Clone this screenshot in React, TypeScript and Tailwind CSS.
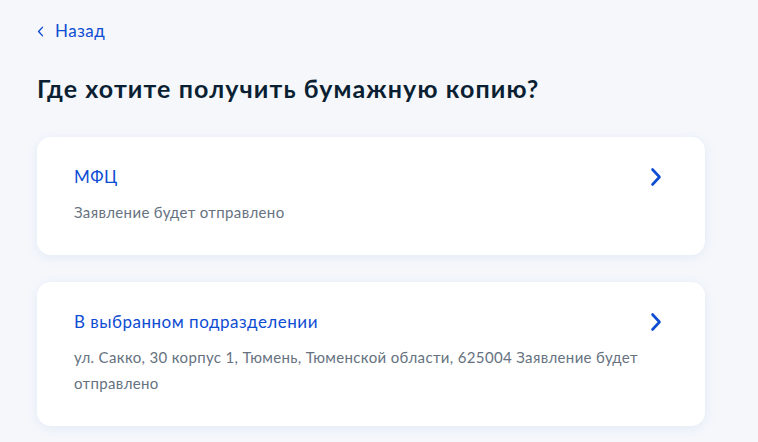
const OPTIONS = [
  { title: 'МФЦ', text: 'Заявление будет отправлено' },
  {
    title: 'В выбранном подразделении',
    text: 'ул. Сакко, 30 корпус 1, Тюмень, Тюменской области, 625004 Заявление будет отправлено',
  },
];

function Chevron({ dir = 'right', className = '' }: { dir?: 'left' | 'right'; className?: string }) {
  return (
    <svg viewBox="0 0 12 20" className={className} fill="none">
      <path
        d={dir === 'right' ? 'M2.5 2.5 L9.5 10 L2.5 17.5' : 'M9.5 2.5 L2.5 10 L9.5 17.5'}
        stroke="currentColor"
        strokeWidth={2.6}
        strokeLinecap="round"
        strokeLinejoin="round"
      />
    </svg>
  );
}

export default function App() {
  return (
    <div className="min-h-[442px] w-full bg-[#f5f7fb] pl-[37px] pt-[20px] font-['Lato','Noto_Sans',sans-serif]">
      {/* Back link */}
      <div className="flex items-center gap-[11px] text-[#0d4cd3] h-[22px]">
        <Chevron dir="left" className="w-[7px] h-[11px]" />
        <span className="text-[17px] leading-[22px] tracking-[0.5px]">Назад</span>
      </div>

      <h1 className="mt-[30px] text-[25px] leading-[32px] font-bold tracking-[1.1px] text-[#0b1f33]">
        Где хотите получить бумажную копию?
      </h1>

      <div className="mt-[33px] w-[668px] flex flex-col gap-[27px]">
        {OPTIONS.map((o) => (
          <div
            key={o.title}
            className="rounded-[14px] bg-white pl-[37px] pr-[43px] pt-[28px] pb-[30px] shadow-[0_2px_12px_rgba(102,150,210,0.12)] flex items-start"
          >
            <div className="flex-1">
              <p className="text-[17px] leading-[24px] tracking-[0.5px] text-[#0d4cd3]">{o.title}</p>
              <p className="mt-[10px] text-[15px] leading-[26px] tracking-[0.35px] text-[#66727f]">{o.text}</p>
            </div>
            <Chevron className="w-[12px] h-[20px] mt-[2px] shrink-0 text-[#0d4cd3]" />
          </div>
        ))}
      </div>
    </div>
  );
}
